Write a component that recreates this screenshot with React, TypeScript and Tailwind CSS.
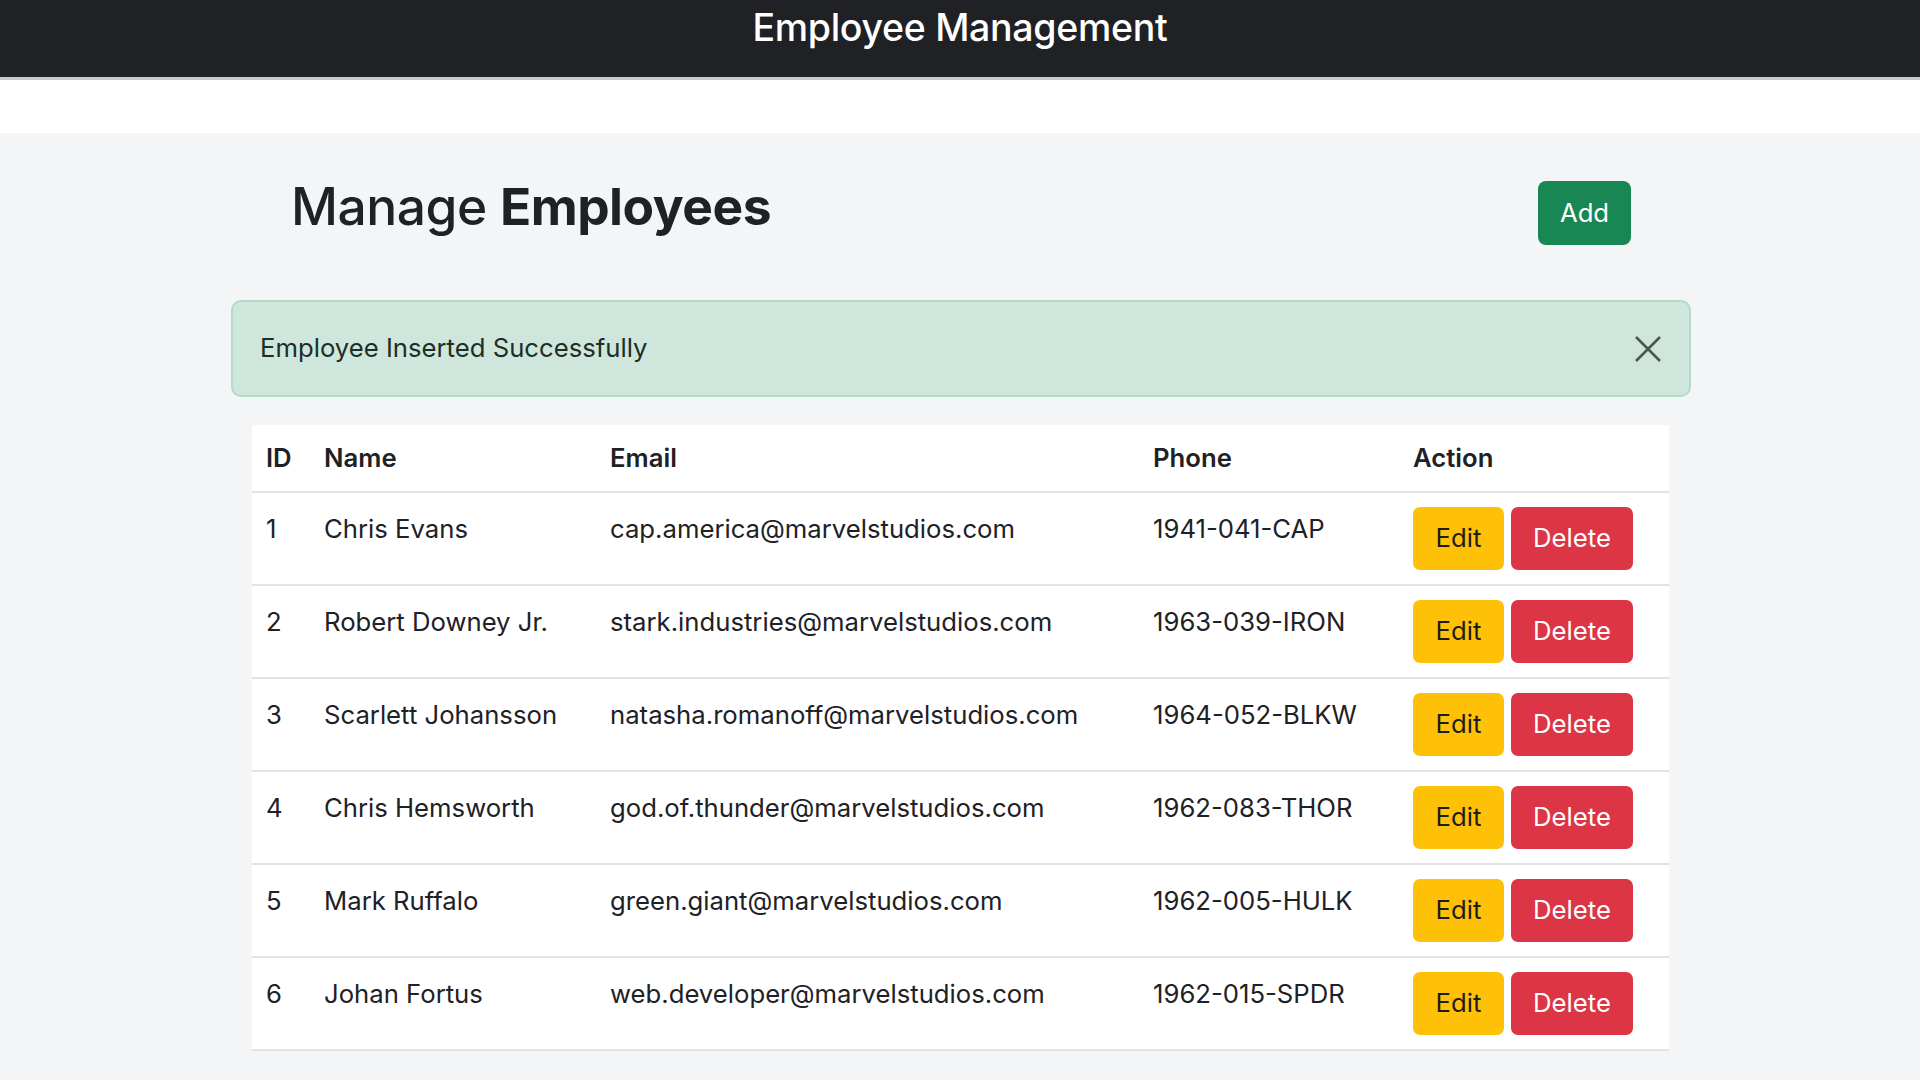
import { useState } from 'react';

interface Employee {
  id: number;
  name: string;
  email: string;
  phone: string;
}

const employees: Employee[] = [
  { id: 1, name: 'Chris Evans', email: 'cap.america@marvelstudios.com', phone: '1941-041-CAP' },
  { id: 2, name: 'Robert Downey Jr.', email: 'stark.industries@marvelstudios.com', phone: '1963-039-IRON' },
  { id: 3, name: 'Scarlett Johansson', email: 'natasha.romanoff@marvelstudios.com', phone: '1964-052-BLKW' },
  { id: 4, name: 'Chris Hemsworth', email: 'god.of.thunder@marvelstudios.com', phone: '1962-083-THOR' },
  { id: 5, name: 'Mark Ruffalo', email: 'green.giant@marvelstudios.com', phone: '1962-005-HULK' },
  { id: 6, name: 'Johan Fortus', email: 'web.developer@marvelstudios.com', phone: '1962-015-SPDR' },
];

export default function App() {
  const [showAlert, setShowAlert] = useState(true);

  return (
    <div className="min-h-screen bg-[#f3f5f7] font-['Inter',sans-serif] text-[#1e2125]">
      {/* navbar */}
      <nav className="h-[80px] bg-[#1f2125] border-b-[3px] border-[#c8c9cb] flex justify-center">
        <span className="text-white text-[37.5px] leading-none pt-[9px] tracking-[-0.3px] font-medium">Employee Management</span>
      </nav>
      <div className="h-[53px] bg-white" />

      <main className="pl-[231px] pr-[229px] pt-[48px] pb-8">
        {/* title */}
        <div className="flex items-center justify-between pl-[60px] pr-[60px]">
          <h2 className="text-[51.5px] leading-none tracking-[-0.5px] -mt-[12px] font-medium">
            Manage <b className="font-bold">Employees</b>
          </h2>
          <button className="h-[64px] w-[93px] rounded-[8px] bg-[#198754] text-white text-[25.7px]">Add</button>
        </div>

        {/* alert */}
        {showAlert && (
          <div className="mt-[55px] h-[97px] rounded-[10px] border-2 border-[#b3dbc7] bg-[#cfe6dc] flex items-center justify-between pl-[27px] pr-[26px]">
            <span className="text-[25.7px] text-[#1c2e25]">Employee Inserted Successfully</span>
            <button onClick={() => setShowAlert(false)} className="text-[#4a5550]">
              <svg width="30" height="30" viewBox="0 0 30 30" fill="none" stroke="currentColor" strokeWidth="2.5">
                <path d="M3 3 L27 27 M27 3 L3 27" />
              </svg>
            </button>
          </div>
        )}

        {/* table */}
        <div className="mt-[28px] ml-[21px] mr-[22px] bg-white">
          <table className="w-full text-left text-[25.7px]">
            <thead>
              <tr className="border-b-2 border-[#dfe2e6] h-[67px]">
                <th className="w-[58px] pl-[14px] font-semibold">ID</th>
                <th className="w-[286px] pl-[14px] font-semibold">Name</th>
                <th className="w-[543px] pl-[14px] font-semibold">Email</th>
                <th className="w-[260px] pl-[14px] font-semibold">Phone</th>
                <th className="pl-[14px] font-semibold">Action</th>
              </tr>
            </thead>
            <tbody>
              {employees.map((emp) => (
                <tr key={emp.id} className="border-b-2 border-[#dfe2e6] h-[93px] align-top">
                  <td className="pl-[14px] pt-[17px]">{emp.id}</td>
                  <td className="pl-[14px] pt-[17px]">{emp.name}</td>
                  <td className="pl-[14px] pt-[17px]">{emp.email}</td>
                  <td className="pl-[14px] pt-[17px]">{emp.phone}</td>
                  <td className="pl-[14px] pt-[14px]">
                    <div className="flex gap-[7px]">
                      <button className="h-[63px] w-[91px] rounded-[7px] bg-[#ffc107] text-[#1d1d1d]">Edit</button>
                      <button className="h-[63px] w-[122px] rounded-[7px] bg-[#dc3545] text-white">Delete</button>
                    </div>
                  </td>
                </tr>
              ))}
            </tbody>
          </table>
        </div>
      </main>
    </div>
  );
}
